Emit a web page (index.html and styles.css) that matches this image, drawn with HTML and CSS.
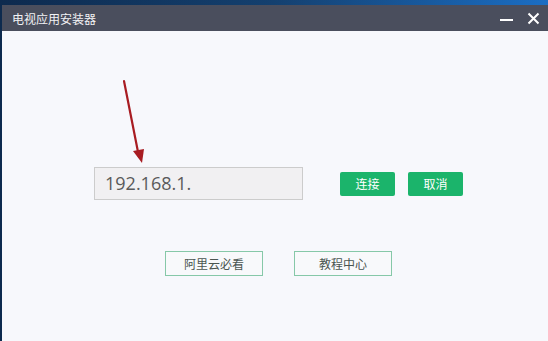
FILE: index.html
```html
<!DOCTYPE html>
<html lang="zh-CN">
<head>
    <meta charset="UTF-8">
    <title>电视应用安装器</title>
    <link rel="stylesheet" href="styles.css">
</head>
<body>
    <div class="desk">
        <div class="window">
            <!-- Title bar -->
            <div class="titlebar">
                <span class="title">电视应用安装器</span>
                <div class="controls">
                    <span class="min"></span>
                    <svg class="close" width="13" height="13" viewBox="0 0 13 13">
                        <path d="M1.5 1.5 L11.5 11.5 M11.5 1.5 L1.5 11.5" stroke="#fff" stroke-width="2"/>
                    </svg>
                </div>
            </div>

            <div class="content">
                <div class="connect-row">
                    <div class="ip-box">192.168.1.</div>
                    <button class="btn green">连接</button>
                    <button class="btn green">取消</button>
                </div>
                <div class="link-row">
                    <button class="btn outline">阿里云必看</button>
                    <button class="btn outline">教程中心</button>
                </div>

                <!-- red annotation arrow -->
                <svg class="arrow" width="40" height="100" viewBox="0 0 40 100">
                    <path d="M4 2 L19 78" stroke="#a81c22" stroke-width="2.2" stroke-linecap="round"/>
                    <path d="M13 72 L22 84 L24 70 Z" fill="#a81c22"/>
                </svg>
            </div>
        </div>
    </div>
</body>
</html>
```

FILE: styles.css
```css
body {
    margin: 0;
    font-family: "Noto Sans CJK SC", "Noto Sans", sans-serif;
    overflow: hidden;
}

.desk {
    height: 341px;
    padding: 5px 0 0 2px;
    box-sizing: border-box;
    background: linear-gradient(90deg, #0d2a4e 0%, #14406f 50%, #1b6ec4 100%);
}

.window {
    height: 100%;
    background: #f7f8fc;
    display: flex;
    flex-direction: column;
}

.titlebar {
    height: 26px;
    background: #4a4e5d;
    display: flex;
    align-items: center;
    justify-content: space-between;
    padding: 0 8px 0 10px;
    color: white;
}

.title {
    font-size: 12px;
    color: #f2f2f4;
}

.controls {
    display: flex;
    align-items: center;
    gap: 14px;
}

.min {
    width: 13px;
    height: 2px;
    background: #fff;
    margin-top: 3px;
}

.content {
    position: relative;
    flex: 1;
}

.connect-row {
    display: flex;
    align-items: center;
    margin-top: 136px;
    padding-left: 92px;
}

.ip-box {
    width: 209px;
    height: 33px;
    box-sizing: border-box;
    border: 1px solid #cccccc;
    background: #f1f0f2;
    color: #5a5a5a;
    font-family: "Open Sans", "Noto Sans", sans-serif;
    font-size: 18px;
    line-height: 31px;
    padding-left: 10px;
    margin-right: 37px;
}

.btn {
    font-family: "Noto Sans CJK SC", sans-serif;
    font-size: 12px;
    padding: 0;
    cursor: pointer;
}

.btn.green {
    width: 55px;
    height: 24px;
    background: #1bb46b;
    color: white;
    border: none;
    border-radius: 2px;
    margin-right: 13px;
}

.link-row {
    display: flex;
    gap: 31px;
    margin-top: 51px;
    padding-left: 163px;
}

.btn.outline {
    width: 98px;
    height: 25px;
    background: #f8f9fb;
    border: 1px solid #86c8a8;
    color: #4a5550;
}

.arrow {
    position: absolute;
    left: 118px;
    top: 48px;
}
```
